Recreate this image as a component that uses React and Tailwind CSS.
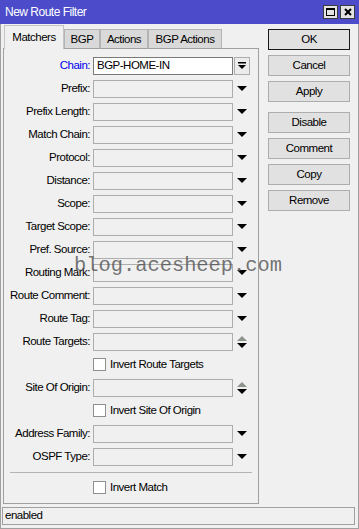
import React from 'react';

const fields = [
  { label: 'Chain:', kind: 'chain', value: 'BGP-HOME-IN' },
  { label: 'Prefix:', kind: 'drop' },
  { label: 'Prefix Length:', kind: 'drop' },
  { label: 'Match Chain:', kind: 'drop' },
  { label: 'Protocol:', kind: 'drop' },
  { label: 'Distance:', kind: 'drop' },
  { label: 'Scope:', kind: 'drop' },
  { label: 'Target Scope:', kind: 'drop' },
  { label: 'Pref. Source:', kind: 'drop' },
  { label: 'Routing Mark:', kind: 'drop' },
  { label: 'Route Comment:', kind: 'drop' },
  { label: 'Route Tag:', kind: 'drop' },
  { label: 'Route Targets:', kind: 'spin' },
  { label: 'Invert Route Targets', kind: 'check' },
  { label: 'Site Of Origin:', kind: 'spin' },
  { label: 'Invert Site Of Origin', kind: 'check' },
  { label: 'Address Family:', kind: 'drop' },
  { label: 'OSPF Type:', kind: 'drop' },
];

const tabs = ['Matchers', 'BGP', 'Actions', 'BGP Actions'];
const tabWidths = ['w-[60px]', 'w-[36px]', 'w-[48px]', 'w-[74px]'];

function DownArrow() {
  return (
    <svg width="10" height="5" viewBox="0 0 10 5">
      <polygon points="0,0 10,0 5,5" fill="#000" />
    </svg>
  );
}

function Spinner() {
  return (
    <svg width="10" height="12" viewBox="0 0 10 12">
      <polygon points="5,0 10,5 0,5" fill="#8c948c" />
      <polygon points="0,7 10,7 5,12" fill="#000" />
    </svg>
  );
}

function Checkbox() {
  return <div className="w-[13px] h-[13px] bg-white border border-[#8f8f8f]" />;
}

function Row({ f }) {
  if (f.kind === 'check') {
    return (
      <div className="h-[23px] flex items-center pl-[89px]">
        <Checkbox />
        <span className="ml-[4px]">{f.label}</span>
      </div>
    );
  }
  return (
    <div className="h-[23px] flex items-center">
      <span className={`w-[86px] text-right whitespace-nowrap ${f.kind === 'chain' ? 'text-[#0000ee]' : ''}`}>
        {f.label}
      </span>
      {f.kind === 'chain' ? (
        <>
          <div className="ml-[3px] w-[140px] h-[18px] bg-white border border-[#7a7a7a] flex items-center pl-[3px]">
            {f.value}
          </div>
          <div className="ml-[1px] w-[16px] h-[18px] border border-[#adadad] bg-[#ececec] flex items-center justify-center">
            <svg width="8" height="7" viewBox="0 0 8 7">
              <rect x="0" y="0" width="8" height="1.5" fill="#000" />
              <polygon points="0,3 8,3 4,7" fill="#000" />
            </svg>
          </div>
        </>
      ) : (
        <>
          <div className="ml-[3px] w-[140px] h-[18px] bg-[#f0f0f0] border border-[#adadad]" />
          <div className="w-[17px] h-[18px] flex items-center justify-center">
            {f.kind === 'spin' ? <Spinner /> : <DownArrow />}
          </div>
        </>
      )}
    </div>
  );
}

function Btn({ children, primary, className = '' }) {
  return (
    <div
      className={`w-[82px] h-[21px] flex items-center justify-center bg-[#e1e1e1] border ${
        primary ? 'border-[#1a1a1a]' : 'border-[#adadad]'
      } ${className}`}
    >
      {children}
    </div>
  );
}

export default function App() {
  return (
    <div className="w-[359px] h-[529px] bg-[#f0f0f0] flex flex-col relative overflow-hidden font-['Liberation_Sans',Arial,sans-serif] text-[11.5px] tracking-[-0.5px] text-black">
      {/* Title bar */}
      <div className="h-[24px] bg-[#4c4ccb] flex items-center pl-[5px] pr-[4px] text-white text-[12px]">
        <span>New Route Filter</span>
        <div className="ml-auto flex gap-[2px]">
          <div className="w-[15px] h-[14px] bg-[#e3e3e3] border border-[#3c3c3c] flex items-center justify-center">
            <div className="w-[9px] h-[8px] border border-black border-t-2" />
          </div>
          <div className="w-[15px] h-[14px] bg-[#e3e3e3] border border-[#3c3c3c] flex items-center justify-center">
            <svg width="8" height="8" viewBox="0 0 8 8">
              <path d="M1 1 L7 7 M7 1 L1 7" stroke="#000" strokeWidth="2" />
            </svg>
          </div>
        </div>
      </div>

      <div className="flex-1 flex flex-col border-x border-b border-[#a0a0a0]">
        <div className="flex">
          {/* Left: tabs + panel */}
          <div className="ml-[2px] w-[256px] flex flex-col">
            <div className="h-[25px] -mb-px flex items-end pl-[1px] relative z-10">
              {tabs.map((t, i) =>
                i === 0 ? (
                  <div
                    key={t}
                    className={`${tabWidths[i]} h-[24px] bg-[#f0f0f0] border border-b-0 border-[#c4c4c4] flex items-center justify-center`}
                  >
                    {t}
                  </div>
                ) : (
                  <div
                    key={t}
                    className={`${tabWidths[i]} h-[20px] bg-[#d9d9d9] border border-[#b4b4b4] border-b-[#a0a0a0] flex items-center justify-center pt-[2px]`}
                  >
                    {t}
                  </div>
                )
              )}
            </div>
            <div className="h-[456px] border border-[#a0a0a0] flex flex-col pt-[5px]">
              {fields.map((f) => (
                <Row key={f.label} f={f} />
              ))}
              <div className="mt-[4px] mx-[6px] h-px bg-[#b4b4b4]" />
              <div className="mt-[3px] h-[23px] flex items-center pl-[89px]">
                <Checkbox />
                <span className="ml-[4px]">Invert Match</span>
              </div>
            </div>
          </div>

          {/* Right: buttons */}
          <div className="ml-[9px] pt-[5px] flex flex-col gap-[5px]">
            <Btn primary>OK</Btn>
            <Btn>Cancel</Btn>
            <Btn>Apply</Btn>
            <Btn className="mt-[5px]">Disable</Btn>
            <Btn>Comment</Btn>
            <Btn>Copy</Btn>
            <Btn>Remove</Btn>
          </div>
        </div>

        {/* Status bar */}
        <div className="mt-[3px] ml-[1px] mr-[3px] h-[18px] border border-[#a0a0a0] flex items-center pl-[2px]">
          enabled
        </div>
      </div>

      {/* Watermark */}
      <div className="absolute left-[74px] top-[251px] font-['Liberation_Mono',monospace] text-[20.4px] tracking-normal text-[#505050]/80 pointer-events-none">
        blog.acesheep.com
      </div>
    </div>
  );
}
